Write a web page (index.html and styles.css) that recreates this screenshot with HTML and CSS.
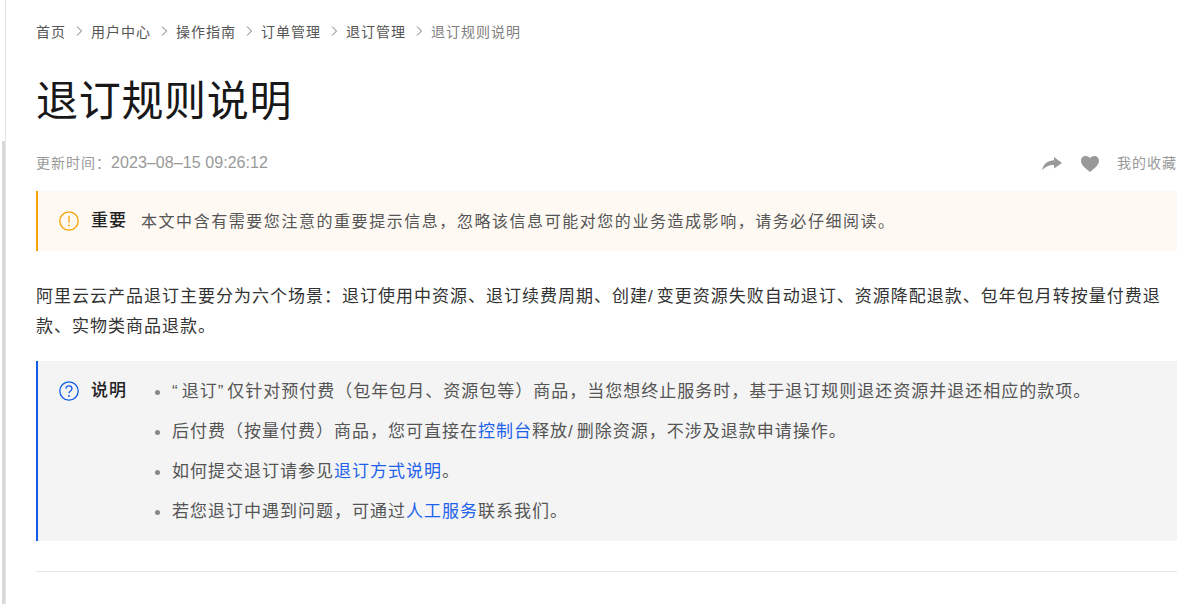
FILE: index.html
```html
<!DOCTYPE html>
<html lang="zh-CN">
<head>
    <meta charset="UTF-8">
    <title>退订规则说明</title>
    <link rel="stylesheet" href="styles.css">
</head>
<body>
    <div class="scroll-track"><div class="scroll-thumb"></div></div>
    <main class="content">
        <nav class="crumbs">
            <a href="#">首页</a>
            <svg class="sep" viewBox="0 0 8 10"><path d="M2 .5L6.500 5 2 9.500" fill="none" stroke="#777" stroke-width="1"/></svg>
            <a href="#">用户中心</a>
            <svg class="sep" viewBox="0 0 8 10"><path d="M2 .5L6.500 5 2 9.500" fill="none" stroke="#777" stroke-width="1"/></svg>
            <a href="#">操作指南</a>
            <svg class="sep" viewBox="0 0 8 10"><path d="M2 .5L6.500 5 2 9.500" fill="none" stroke="#777" stroke-width="1"/></svg>
            <a href="#">订单管理</a>
            <svg class="sep" viewBox="0 0 8 10"><path d="M2 .5L6.500 5 2 9.500" fill="none" stroke="#777" stroke-width="1"/></svg>
            <a href="#">退订管理</a>
            <svg class="sep" viewBox="0 0 8 10"><path d="M2 .5L6.500 5 2 9.500" fill="none" stroke="#777" stroke-width="1"/></svg>
            <span class="current">退订规则说明</span>
        </nav>

        <h1 class="title">退订规则说明</h1>

        <div class="meta">
            <span class="updated">更新时间：<span class="date">2023–08–15 09:26:12</span></span>
            <div class="actions">
                <svg class="share" viewBox="0 0 20 14"><path d="M12 0l8 6-8 5.500V8C7 8 3.500 9.500 0 13.500 1 8 5 3.500 12 3.300z" fill="#999"/></svg>
                <svg class="heart" viewBox="0 0 18 16"><path d="M9 16C4 12 0 9 0 4.800 0 2 2.200 0 4.800 0 6.500 0 8 .8 9 2.200 10 .8 11.500 0 13.200 0 15.800 0 18 2 18 4.800 18 9 14 12 9 16z" fill="#999"/></svg>
                <span class="fav">我的收藏</span>
            </div>
        </div>

        <div class="note note-warn">
            <svg class="note-icon" viewBox="0 0 20 20"><circle cx="10" cy="10" r="9.200" fill="none" stroke="#f5a300" stroke-width="1.300"/><path d="M10 4.800v7" stroke="#f5a300" stroke-width="1.300"/><circle cx="10" cy="14.500" r=".9" fill="#f5a300"/></svg>
            <strong class="note-label">重要</strong>
            <p class="note-text">本文中含有需要您注意的重要提示信息，忽略该信息可能对您的业务造成影响，请务必仔细阅读。</p>
        </div>

        <p class="para">阿里云云产品退订主要分为六个场景：退订使用中资源、退订续费周期、创建<span class="wide">/</span>变更资源失败自动退订、资源降配退款、包年包月转按量付费退款、实物类商品退款。</p>

        <div class="note note-info">
            <svg class="note-icon" viewBox="0 0 20 20"><circle cx="10" cy="10" r="9.200" fill="none" stroke="#0f5be8" stroke-width="1.300"/><path d="M7 7.800c0-1.800 1.300-3 3-3s3 1.200 3 2.800c0 2.400-3 2.400-3 4.700" fill="none" stroke="#0f5be8" stroke-width="1.300"/><circle cx="10" cy="15" r=".9" fill="#0f5be8"/></svg>
            <strong class="note-label">说明</strong>
            <ul class="note-list">
                <li><span class="wide">“</span>退订<span class="wide">”</span>仅针对预付费（包年包月、资源包等）商品，当您想终止服务时，基于退订规则退还资源并退还相应的款项。</li>
                <li>后付费（按量付费）商品，您可直接在<a href="#">控制台</a>释放<span class="wide">/</span>删除资源，不涉及退款申请操作。</li>
                <li>如何提交退订请参见<a href="#">退订方式说明</a>。</li>
                <li>若您退订中遇到问题，可通过<a href="#">人工服务</a>联系我们。</li>
            </ul>
        </div>

        <hr class="rule">
    </main>
</body>
</html>
```

FILE: styles.css
```css
html, body {
    margin: 0;
    height: 100%;
    overflow: hidden;
    background: #fff;
}

body {
    font-family: "Liberation Sans", "Noto Sans CJK SC", sans-serif;
    color: #333;
    display: flex;
}

a {
    color: inherit;
    text-decoration: none;
}

.scroll-track {
    width: 6px;
    flex-shrink: 0;
    border-right: 1px solid #e4e4e4;
    box-sizing: border-box;
}

.scroll-thumb {
    margin: 141px 0 0 2px;
    height: 463px;
    width: 3px;
    background: #d8d8d8;
}

.content {
    flex: 1;
    min-width: 0;
    padding: 20px 0 0 30px;
}

.crumbs {
    display: flex;
    align-items: center;
    gap: 8.5px;
    height: 22px;
    font-size: 14px;
    letter-spacing: 1px;
    color: #555;
}

.sep {
    width: 8px;
    height: 10px;
}

.crumbs .current {
    color: #808080;
}

.title {
    margin: 30px 0 0;
    font-size: 42px;
    letter-spacing: .7px;
    line-height: 60px;
    font-weight: 400;
    color: #181818;
}

.meta {
    display: flex;
    justify-content: space-between;
    align-items: center;
    margin-top: 19px;
    height: 22px;
    font-size: 14px;
    letter-spacing: 1px;
    color: #999;
}

.date {
    font-size: 16px;
    letter-spacing: .07px;
}

.actions {
    display: flex;
    align-items: center;
}

.share {
    width: 20px;
    height: 14px;
    margin: 3px 19px 0 0;
}

.heart {
    width: 18px;
    height: 16px;
    margin: 3px 18px 0 0;
}

.note {
    display: flex;
    border-left: 2px solid;
    padding-left: 21px;
    box-sizing: border-box;
    font-size: 16px;
    letter-spacing: 1.55px;
}

.note-warn {
    margin-top: 18px;
    height: 60px;
    align-items: center;
    background: #fef9f3;
    border-color: #f5a300;
}

.note-info {
    margin-top: 19px;
    height: 180px;
    padding-top: 20px;
    align-items: flex-start;
    background: #f4f4f4;
    border-color: #0f5be8;
}

.note-icon {
    width: 20px;
    height: 20px;
    flex-shrink: 0;
    margin-right: 12px;
}

.note-label {
    font-size: 17px;
    letter-spacing: 1px;
    line-height: 20px;
    font-weight: 500;
    color: #222;
    flex-shrink: 0;
}

.note-text {
    margin: 0 0 2px 14px;
    color: #555;
}

.para {
    margin: 31px 0 0;
    font-size: 17px;
    letter-spacing: 1px;
    line-height: 30px;
    color: #333;
}

.wide {
    letter-spacing: 4px;
}

.note-list {
    margin: -9px 0 0 45px;
    padding: 0;
    list-style: none;
    font-size: 17px;
    letter-spacing: 1px;
    line-height: 40px;
    color: #555;
}

.note-list li {
    position: relative;
}

.note-list li::before {
    content: "";
    position: absolute;
    left: -17px;
    top: 18px;
    width: 5px;
    height: 5px;
    border-radius: 50%;
    background: #888;
}

.note-list a {
    color: #1d62ea;
}

.rule {
    margin: 30px 0 0;
    border: 0;
    border-top: 1px solid #e8e8e8;
}
```
